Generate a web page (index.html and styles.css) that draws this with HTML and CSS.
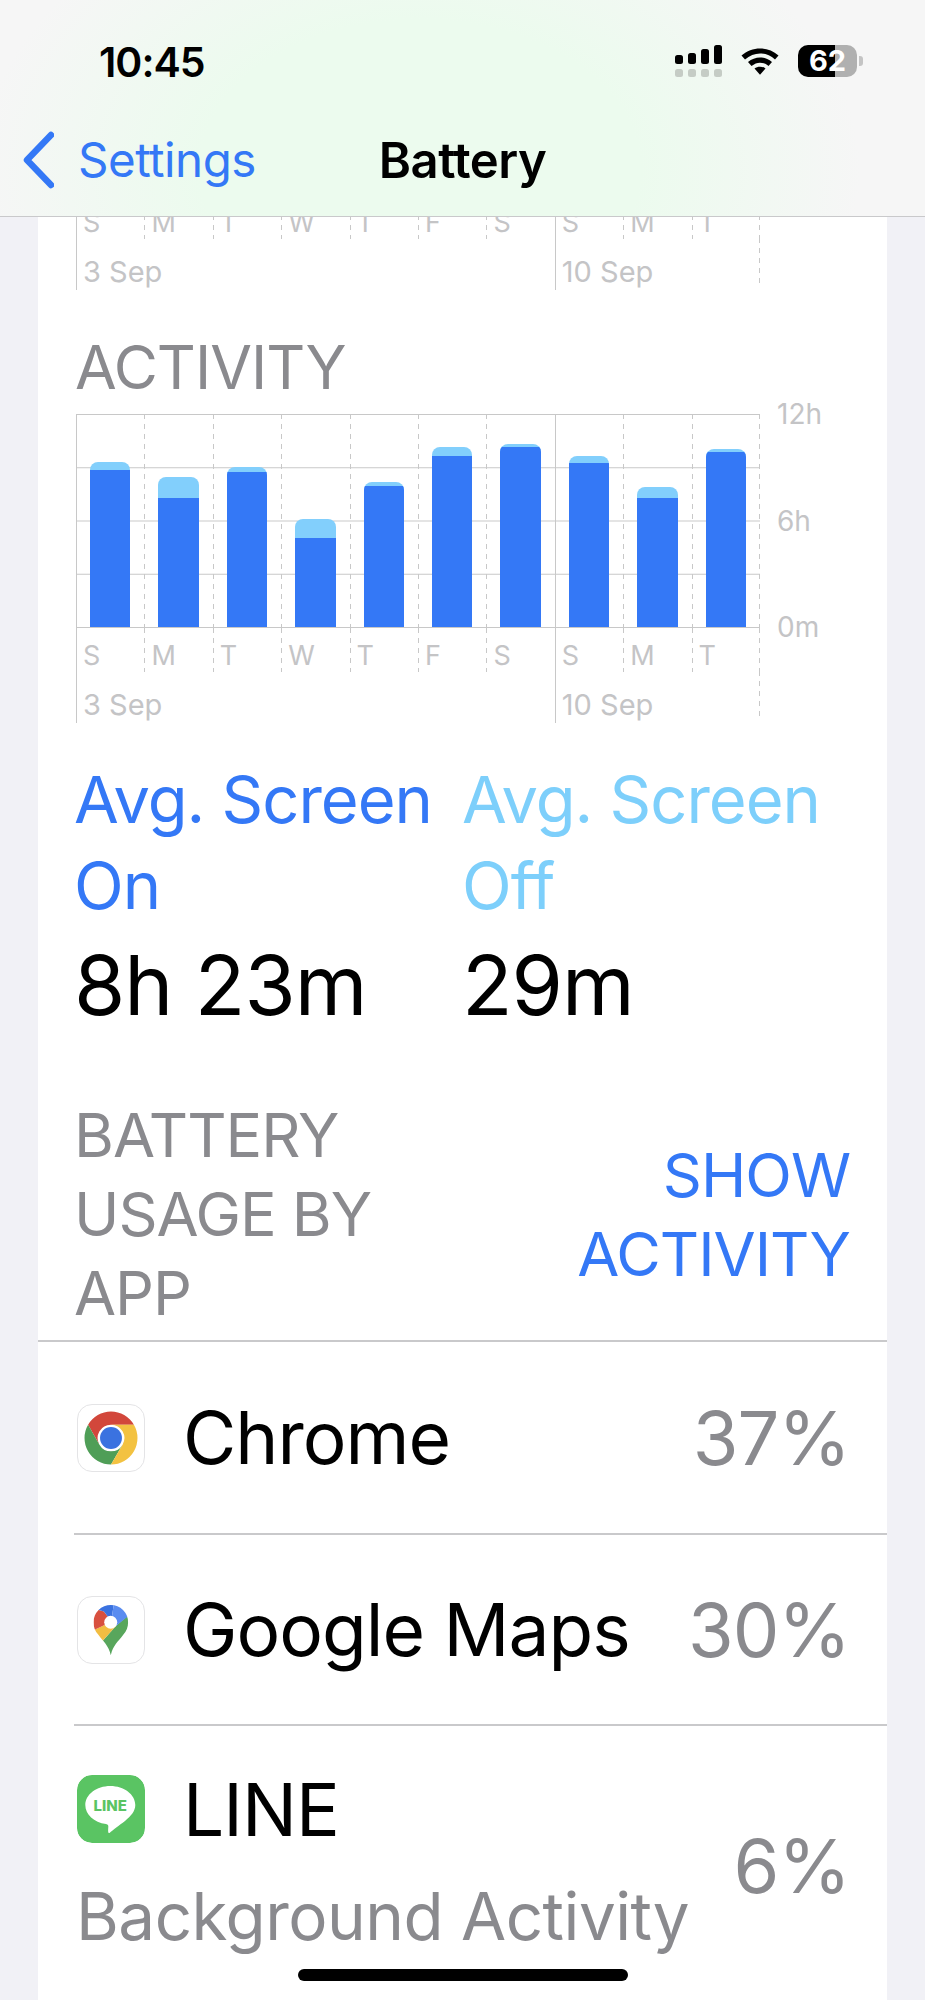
FILE: index.html
```html
<!DOCTYPE html>
<html lang="en">
<head>
	<meta charset="utf-8">
	<title>Battery</title>
	<link rel="stylesheet" href="styles.css">
</head>
<body>
	<header class="topbar">
		<div class="status">
			<span class="time">10:45</span>
			<div class="status-icons">
				<div class="signal">
					<div class="signal-top"><i class="s1"></i><i class="s2"></i><i class="s3"></i><i class="s4"></i></div>
					<div class="signal-bottom"><i></i><i></i><i></i><i></i></div>
				</div>
				<svg class="wifi" width="40" height="29" viewBox="0 0 40 29">
					<path d="M1.5 9.5C12 0 28 0 38.500 9.500L35 13.500C26 5.500 14 5.500 5 13.500Z" fill="#000"/>
					<path d="M8 16C15 10 25 10 32 16L28.500 20C23 15.500 17 15.500 11.500 20Z" fill="#000"/>
					<path d="M14.500 22.500C17.500 20 22.500 20 25.500 22.500L20 28.800Z" fill="#000"/>
				</svg>
				<div class="battery"><span class="battery-num">62</span></div>
				<div class="battery-nub"></div>
			</div>
		</div>
		<nav class="navbar">
			<a class="back">
				<svg width="34" height="58" viewBox="0 0 34 58"><path d="M31 4 L7 29 L31 54" fill="none" stroke="#3478f6" stroke-width="6.500" stroke-linecap="round" stroke-linejoin="round"/></svg>
				<span>Settings</span>
			</a>
			<span class="nav-title">Battery</span>
		</nav>
	</header>

	<main class="card">
		<div class="axis axis-cut">
			<div class="axis-days">
				<span class="week-start">S</span><span>M</span><span>T</span><span>W</span><span>T</span><span>F</span><span>S</span><span class="week-start">S</span><span>M</span><span>T</span>
			</div>
			<div class="axis-weeks"><span class="w1">3 Sep</span><span class="w2">10 Sep</span></div>
		</div>

		<h2 class="chart-title">ACTIVITY</h2>
		<div class="chart">
			<div class="plot">
				<div class="day week-start"><div class="bar" style="height:165px"><div class="bar-on" style="height:157px"></div></div></div>
				<div class="day"><div class="bar" style="height:150px"><div class="bar-on" style="height:129px"></div></div></div>
				<div class="day"><div class="bar" style="height:160px"><div class="bar-on" style="height:155px"></div></div></div>
				<div class="day"><div class="bar" style="height:108px"><div class="bar-on" style="height:89px"></div></div></div>
				<div class="day"><div class="bar" style="height:145px"><div class="bar-on" style="height:141px"></div></div></div>
				<div class="day"><div class="bar" style="height:180px"><div class="bar-on" style="height:171px"></div></div></div>
				<div class="day"><div class="bar" style="height:183px"><div class="bar-on" style="height:180px"></div></div></div>
				<div class="day week-start"><div class="bar" style="height:171px"><div class="bar-on" style="height:164px"></div></div></div>
				<div class="day"><div class="bar" style="height:140px"><div class="bar-on" style="height:129px"></div></div></div>
				<div class="day"><div class="bar" style="height:178px"><div class="bar-on" style="height:175px"></div></div></div>
			</div>
			<div class="y-labels"><span>12h</span><span>6h</span><span>0m</span></div>
		</div>
		<div class="axis">
			<div class="axis-days">
				<span class="week-start">S</span><span>M</span><span>T</span><span>W</span><span>T</span><span>F</span><span>S</span><span class="week-start">S</span><span>M</span><span>T</span>
			</div>
			<div class="axis-weeks"><span class="w1">3 Sep</span><span class="w2">10 Sep</span></div>
		</div>

		<div class="averages">
			<div>
				<div class="avg-label on">Avg. Screen On</div>
				<div class="avg-value">8h 23m</div>
			</div>
			<div>
				<div class="avg-label off">Avg. Screen Off</div>
				<div class="avg-value">29m</div>
			</div>
		</div>

		<div class="usage-head">
			<div class="usage-title">BATTERY USAGE BY APP</div>
			<a class="usage-link">SHOW ACTIVITY</a>
		</div>

		<div class="app-list">
			<div class="app-row row-chrome">
				<div class="app-main">
					<div class="app-line">
						<svg class="app-icon bordered" viewBox="0 0 68 68">
							<path d="M34 20.300H57.600A27.300 27.300 0 0 0 10.400 20.300L22.100 40.850A13.700 13.700 0 0 1 34 20.300Z" fill="#d2473b"/>
							<path d="M22.100 40.850L10.400 20.300A27.300 27.300 0 0 0 34 61.300L45.900 40.850A13.700 13.700 0 0 1 22.100 40.850Z" fill="#4f9e57"/>
							<path d="M45.900 40.850L34 61.300A27.300 27.300 0 0 0 57.600 20.300H34A13.700 13.700 0 0 1 45.900 40.850Z" fill="#f3c241"/>
							<circle cx="34" cy="34" r="11.300" fill="#3a72e0"/>
						</svg>
						<span class="app-name">Chrome</span>
					</div>
				</div>
				<span class="app-pct">37%</span>
			</div>
			<div class="app-row row-maps">
				<div class="app-main">
					<div class="app-line">
						<svg class="app-icon bordered" viewBox="0 0 68 68">
							<clipPath id="pin"><path d="M33.800 60C31.500 50 26 46 21 39C17.500 35 16 31 16 26A17.800 17.800 0 0 1 51.600 26C51.600 31 50 35 46.600 39C41.500 46 36 50 33.800 60Z"/></clipPath>
							<g clip-path="url(#pin)">
								<path d="M23 48L39 30L55 16L60 70H20Z" fill="#58a65c"/>
								<path d="M10 37L29 28L39 30L23 48L30 70H10Z" fill="#f2bd42"/>
								<path d="M26.700 15L32 22L29 28L10 37V10Z" fill="#d8503f"/>
								<path d="M10 0H38L35 20L32 22L26.700 15L10 10Z" fill="#3a72e0"/>
								<path d="M38 0H60V13L39 30L32 22L35 20Z" fill="#5a8cf0"/>
							</g>
							<circle cx="33.700" cy="26" r="6.700" fill="#fff"/>
						</svg>
						<span class="app-name">Google Maps</span>
					</div>
				</div>
				<span class="app-pct">30%</span>
			</div>
			<div class="app-row row-line">
				<div class="app-main">
					<div class="app-line">
						<svg class="app-icon" viewBox="0 0 68 68">
							<rect width="68" height="68" rx="15" fill="#5ac463"/>
							<path d="M33.300 11C47 11 58.300 19.500 58.300 30C58.300 36 54 41 48 46C42 50.500 36 55 32.500 58C31 58.500 31 56 31.300 52C31.500 50.300 31 49.500 29 49C17 47.500 8.300 39.500 8.300 30C8.300 19.500 19.600 11 33.300 11Z" fill="#fff"/>
							<text class="line-logo" x="33.300" y="36">LINE</text>
						</svg>
						<span class="app-name">LINE</span>
					</div>
					<div class="app-sub">Background Activity</div>
				</div>
				<span class="app-pct">6%</span>
			</div>
		</div>
	</main>

	<div class="home-bar"></div>
</body>
</html>
```

FILE: styles.css
```css
:root {
	--line: linear-gradient(#c8c8c8, #c8c8c8);
	--dash: repeating-linear-gradient(#c8c8c8 0 5px, transparent 5px 10px);
}

* {
	box-sizing: border-box;
}

html, body {
	margin: 0;
	height: 2000px;
	overflow: hidden;
}

body {
	position: relative;
	display: flex;
	flex-direction: column;
	background: #f1f1f6;
	font-family: Inter, "Liberation Sans", sans-serif;
	color: #000;
}

/* top bar */
.topbar {
	position: relative;
	z-index: 2;
	height: 217px;
	flex: none;
	border-bottom: 1px solid #c9c9cb;
	background: radial-gradient(ellipse 440px 300px at 420px 170px, #ecfbee 50%, #f6f6f6 100%);
}

.status {
	display: flex;
	justify-content: space-between;
	height: 118px;
	padding: 39px 62px 0 99px;
}

.time {
	font-size: 41px;
	font-weight: 600;
	line-height: 46px;
	letter-spacing: -1px;
}

.status-icons {
	display: flex;
	align-items: flex-start;
	padding-top: 6px;
}

.signal-top, .signal-bottom {
	display: flex;
	gap: 5px;
}

.signal-top {
	align-items: flex-end;
	height: 19px;
}

.signal-top i {
	display: block;
	width: 8px;
	background: #000;
	border-radius: 2.500px;
}

.s1 { height: 9px; }
.s2 { height: 11px; }
.s3 { height: 15px; }
.s4 { height: 19px; }

.signal-bottom {
	margin-top: 5px;
}

.signal-bottom i {
	display: block;
	width: 8px;
	height: 8px;
	background: #c5ccc5;
	border-radius: 2.500px;
}

.wifi {
	margin: 1px 18px 0 18px;
}

.battery {
	width: 59px;
	height: 32px;
	border-radius: 10px;
	background: linear-gradient(90deg, #000 37px, #b0b0b0 37px);
	color: #fff;
	text-align: center;
}

.battery-num {
	font-size: 29px;
	font-weight: 700;
	line-height: 32px;
}

.battery-nub {
	width: 4px;
	height: 10px;
	margin: 11px 0 0 2px;
	background: #c4c4c4;
	border-radius: 0 3px 3px 0;
}

.navbar {
	position: relative;
	display: flex;
	justify-content: center;
	align-items: center;
	height: 84px;
}

.back {
	position: absolute;
	left: 20px;
	top: 10px;
	display: flex;
	align-items: center;
	gap: 24px;
	color: #3478f6;
	font-size: 47.500px;
	line-height: 64px;
	letter-spacing: -0.500px;
}

.nav-title {
	font-size: 49px;
	font-weight: 600;
	letter-spacing: -0.500px;
}

/* card */
.card {
	width: 849px;
	margin: 0 0 0 38px;
	padding-left: 38px;
	background: #fff;
	flex: 1;
	overflow: hidden;
}

.axis {
	width: 684px;
	color: #c4c4c6;
	font-size: 27px;
}

.axis-cut {
	margin-top: -22px;
}

.axis-days {
	display: grid;
	grid-template-columns: repeat(10, 1fr);
	height: 43px;
	background: var(--dash) right top / 1px 100% no-repeat;
}

.axis-days span {
	padding: 12px 0 0 7px;
	line-height: 32px;
	background: var(--dash) left top / 1px 100% no-repeat;
}

.axis-days .week-start {
	background: var(--line) left top / 1px 100% no-repeat;
}

.axis-weeks {
	display: grid;
	grid-template-columns: 7fr 3fr;
	height: 52px;
}

.axis-weeks span {
	padding: 18px 0 0 7px;
	font-size: 29px;
	line-height: 32px;
	background: var(--line) left top / 1px 100% no-repeat;
}

.axis-weeks .w2 {
	background: var(--line) left top / 1px 100% no-repeat,
		var(--dash) right top / 1px 47px no-repeat;
}

.chart-title {
	margin: 42px 0 12px -1px;
	color: #8a8a8e;
	font-size: 60.500px;
	font-weight: 400;
	line-height: 70px;
	letter-spacing: -1px;
}

.chart {
	display: flex;
}

.plot {
	display: grid;
	grid-template-columns: repeat(10, 1fr);
	flex: none;
	width: 684px;
	height: 214px;
	background: linear-gradient(#c8c8c8 1px, transparent 1px) 0 0 / 100% 53.250px;
}

.day {
	display: flex;
	align-items: flex-end;
	padding: 0 14px;
	background: var(--dash) left top / 1px 100% no-repeat;
}

.day:last-child {
	background: var(--dash) left top / 1px 100% no-repeat,
		var(--dash) right top / 1px 100% no-repeat;
}

.day.week-start {
	background: var(--line) left top / 1px 100% no-repeat;
}

.bar {
	display: flex;
	flex-direction: column;
	justify-content: flex-end;
	width: 100%;
	margin-bottom: 1px;
	background: #82cffc;
	border-radius: 8px 8px 0 0;
	overflow: hidden;
}

.bar-on {
	background: #3478f6;
}

.y-labels {
	display: flex;
	flex-direction: column;
	justify-content: space-between;
	height: 213px;
	margin-left: 17px;
	color: #c4c4c6;
	font-size: 28px;
}

.y-labels span {
	line-height: 0;
}

/* averages */
.averages {
	display: grid;
	grid-template-columns: 388px 384px;
	margin: 34px 0 0 -2px;
}

.avg-label {
	font-size: 65px;
	line-height: 86px;
	letter-spacing: -1px;
}

.avg-label.on {
	color: #3478f6;
}

.avg-label.off {
	color: #7dcffb;
}

.avg-value {
	margin-top: 14px;
	font-size: 83px;
	line-height: 85px;
	letter-spacing: -1px;
}

/* usage */
.usage-head {
	display: flex;
	justify-content: space-between;
	align-items: center;
	margin: 68px 0 0 -2px;
	padding-right: 37px;
}

.usage-title {
	width: 300px;
	color: #8a8a8e;
	font-size: 61px;
	line-height: 79px;
	letter-spacing: -1px;
}

.usage-link {
	width: 300px;
	color: #3478f6;
	font-size: 61px;
	line-height: 79px;
	letter-spacing: -1px;
	text-align: right;
}

.app-list {
	margin: 7px 0 0 -38px;
	border-top: 2px solid #c9c9cb;
}

.app-row {
	display: flex;
	justify-content: space-between;
	align-items: center;
	margin-left: 36px;
	padding-right: 37px;
	border-bottom: 2px solid #c9c9cb;
}

.row-chrome { height: 193px; }
.row-maps { height: 191px; }
.row-line { height: 280px; border-bottom: 0; }

.app-line {
	display: flex;
	align-items: center;
	gap: 40px;
	padding-left: 3px;
}

.app-icon {
	display: block;
	flex: none;
	width: 68px;
	height: 68px;
	border-radius: 15px;
}

.app-icon.bordered {
	border: 1px solid #e4e4e6;
}

.line-logo {
	fill: #5ac463;
	font-size: 15px;
	font-weight: 800;
	text-anchor: middle;
}

.app-name {
	font-size: 73px;
	letter-spacing: -1px;
	margin-left: -2px;
}

.app-sub {
	margin-top: 25px;
	padding: 0 0 13px 2px;
	color: #8a8a8e;
	font-size: 65.500px;
	line-height: 76px;
	letter-spacing: -0.500px;
}

.app-pct {
	color: #8a8a8e;
	font-size: 74px;
	letter-spacing: -1px;
}

.home-bar {
	position: absolute;
	left: 298px;
	top: 1969px;
	width: 330px;
	height: 12px;
	background: #000;
	border-radius: 6px;
}
```
